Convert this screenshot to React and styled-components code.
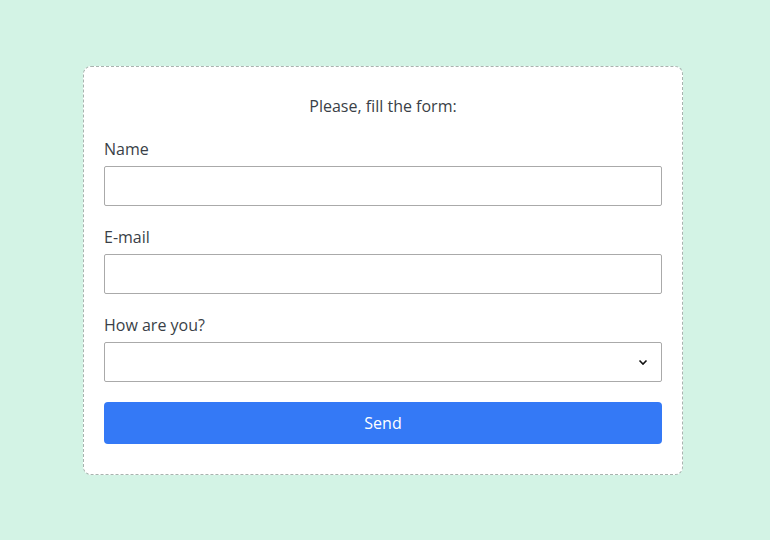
import React from 'react';
import styled, { createGlobalStyle } from 'styled-components';

const Global = createGlobalStyle`
  html, body {
    margin: 0;
    padding: 0;
    background: #d3f3e5;
    font-family: "Open Sans", sans-serif;
    color: #3a3f47;
  }
`;

const Page = styled.div`
  width: 770px;
  height: 540px;
  padding-top: 66px;
  box-sizing: border-box;
`;

const Card = styled.form`
  width: 600px;
  margin-left: 83px;
  box-sizing: border-box;
  background: #fff;
  border: 1px dashed #a9b3af;
  border-radius: 8px;
  padding: 27px 20px 30px;
  display: flex;
  flex-direction: column;
`;

const Title = styled.div`
  text-align: center;
  font-size: 16px;
  line-height: 24px;
  margin-bottom: 19px;
`;

const Field = styled.label`
  display: flex;
  flex-direction: column;
  gap: 5px;
  margin-bottom: 19px;
  font-size: 16px;
  line-height: 24px;
`;

const Input = styled.input`
  height: 40px;
  box-sizing: border-box;
  border: 1px solid #aaa;
  border-radius: 2px;
  padding: 0 10px;
  font: inherit;
  outline: none;
`;

const chevron = encodeURIComponent(
  '<svg xmlns="http://www.w3.org/2000/svg" width="10" height="7" viewBox="0 0 10 7"><path d="M1.5 1.5 L5 5 L8.5 1.5" fill="none" stroke="#111" stroke-width="1.6"/></svg>'
);

const Select = styled.select`
  height: 40px;
  box-sizing: border-box;
  border: 1px solid #aaa;
  border-radius: 2px;
  padding: 0 10px;
  background: #fff url("data:image/svg+xml,${chevron}") no-repeat right 13px center;
  appearance: none;
  font: inherit;
  outline: none;
`;

const Button = styled.button`
  margin-top: 1px;
  height: 42px;
  border: none;
  border-radius: 4px;
  background: #3479f6;
  color: #fff;
  font-family: "Open Sans", sans-serif;
  font-size: 16px;
`;

export default function App() {
  return (
    <Page>
      <Global />
      <Card onSubmit={e => e.preventDefault()}>
        <Title>Please, fill the form:</Title>
        <Field>
          Name
          <Input type="text" />
        </Field>
        <Field>
          E-mail
          <Input type="email" />
        </Field>
        <Field>
          How are you?
          <Select defaultValue="">
            <option value=""></option>
            <option value="good">Good</option>
            <option value="bad">Bad</option>
          </Select>
        </Field>
        <Button type="submit">Send</Button>
      </Card>
    </Page>
  );
}
